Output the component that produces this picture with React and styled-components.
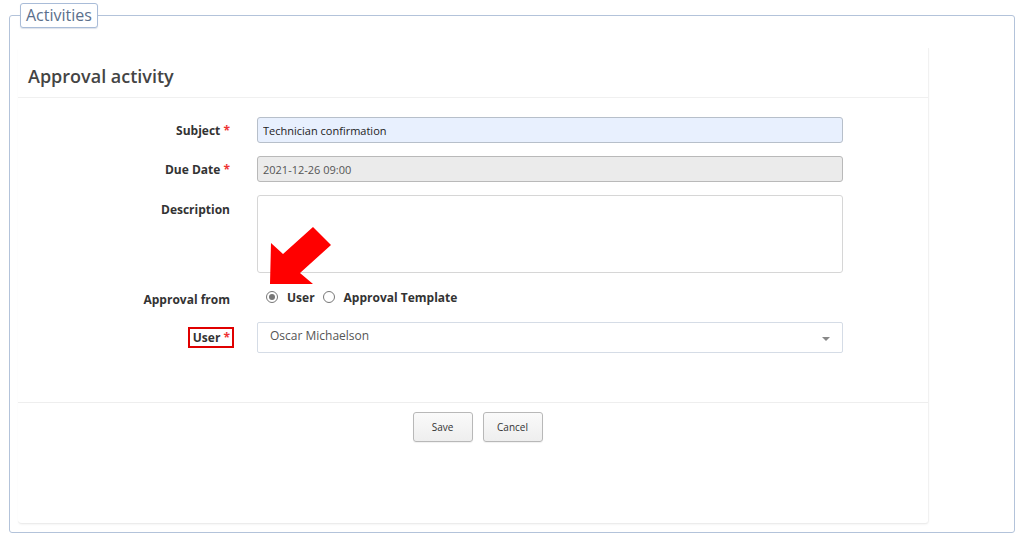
import React from 'react';
import styled, { createGlobalStyle } from 'styled-components';

const GlobalStyle = createGlobalStyle`
  html, body {
    margin: 0;
    padding: 0;
    background: #ffffff;
    font-family: 'Open Sans', 'Noto Sans', sans-serif;
  }
  * { box-sizing: border-box; }
`;

export default function App() {
  return (
    <>
      <GlobalStyle />
      <Frame>
        <Legend>Activities</Legend>
        <Panel>
          <PanelHeader>Approval activity</PanelHeader>
          <PanelBody>
            <Row>
              <Label>Subject <Star>*</Star></Label>
              <TextInput tone="focus" readOnly value="Technician confirmation" />
            </Row>
            <Row>
              <Label>Due Date <Star>*</Star></Label>
              <TextInput tone="disabled" readOnly value="2021-12-26 09:00" />
            </Row>
            <Row top>
              <Label top>Description</Label>
              <TextArea />
            </Row>
            <Row>
              <Label shift>Approval from</Label>
              <RadioGroup>
                <Arrow viewBox="0 0 70 64" aria-hidden="true">
                  <polygon points="2,59 3,18 15,29 45,2 63,20 32,48 45,59" fill="#ff0000" />
                </Arrow>
                <RadioOption>
                  <Radio checked />
                  <span>User</span>
                </RadioOption>
                <RadioOption>
                  <Radio />
                  <span>Approval Template</span>
                </RadioOption>
              </RadioGroup>
            </Row>
            <Row>
              <Label>
                <Highlight>User <Star>*</Star></Highlight>
              </Label>
              <Select>
                <span>Oscar Michaelson</span>
                <Caret />
              </Select>
            </Row>
          </PanelBody>
          <PanelFooter>
            <Button>Save</Button>
            <Button>Cancel</Button>
          </PanelFooter>
        </Panel>
      </Frame>
    </>
  );
}

const Frame = styled.fieldset`
  margin: 3px 0 0 9px;
  width: 1006px;
  height: 530px;
  padding: 12px 8px 8px 8px;
  border: 1px solid #b3c3da;
  border-radius: 3px;
  display: flex;
  flex-direction: column;
`;

const Legend = styled.legend`
  margin-left: 2px;
  padding: 0 5px;
  height: 25px;
  line-height: 22px;
  border: 1px solid #a9bcd8;
  border-radius: 3px;
  color: #5b6f8c;
  font-size: 16px;
  background: #fff;
  box-shadow: 0 1px 1px rgba(120, 140, 170, 0.25);
`;

const Panel = styled.section`
  width: 911px;
  flex: 1;
  margin-top: 8px;
  background: #fff;
  border-right: 1px solid #f1f1f1;
  border-bottom: 1px solid #ececec;
  border-radius: 0 0 4px 4px;
  box-shadow: 0 1px 2px rgba(0, 0, 0, 0.04);
  display: flex;
  flex-direction: column;
`;

const PanelHeader = styled.h2`
  margin: 0;
  padding: 16px 10px 9px;
  font-size: 18px;
  line-height: 24px;
  font-weight: 600;
  color: #444;
  border-bottom: 1px solid #f0f0f0;
`;

const PanelBody = styled.div`
  padding: 19px 0 49px;
  display: flex;
  flex-direction: column;
  gap: 13px;
  border-bottom: 1px solid #eeeeee;
`;

const Row = styled.div`
  display: flex;
  align-items: ${p => (p.top ? 'flex-start' : 'center')};
  gap: 22px;
`;

const Label = styled.label`
  width: 217px;
  padding-right: 5px;
  padding-top: ${p => (p.top ? '6px' : p.shift ? '4px' : '0')};
  text-align: right;
  font-size: 12px;
  font-weight: 700;
  color: #333;
`;

const Star = styled.span`
  color: #e33;
`;

const Highlight = styled.span`
  display: inline-block;
  margin-right: -4px;
  padding: 1px 2px 1px 3px;
  border: 2px solid #e00000;
  line-height: 15px;
`;

const TextInput = styled.input`
  width: 586px;
  height: 26px;
  padding: 0 5px;
  font-family: inherit;
  font-size: 11px;
  border-radius: 3px;
  outline: none;
  border: 1px solid ${p => (p.tone === 'disabled' ? '#b9b9b9' : '#b7bfca')};
  background: ${p => (p.tone === 'disabled' ? '#ebebeb' : '#e8f0fe')};
  color: ${p => (p.tone === 'disabled' ? '#555' : '#222')};
`;

const TextArea = styled.textarea`
  width: 586px;
  height: 78px;
  resize: none;
  border: 1px solid #d6d6d6;
  border-radius: 3px;
  outline: none;
`;

const RadioGroup = styled.div`
  position: relative;
  height: 23px;
  display: flex;
  align-items: center;
  gap: 8px;
  padding-left: 9px;
  padding-bottom: 1px;
  font-size: 12px;
  font-weight: 700;
  color: #333;
`;

const Arrow = styled.svg`
  position: absolute;
  left: 11px;
  top: -61px;
  width: 70px;
  height: 64px;
`;

const RadioOption = styled.span`
  display: inline-flex;
  align-items: center;
  gap: 9px;
`;

const Radio = styled.span`
  width: 12px;
  height: 12px;
  border-radius: 50%;
  border: 1px solid #777;
  background: #fff;
  display: inline-flex;
  align-items: center;
  justify-content: center;
  &::after {
    content: '';
    width: 6px;
    height: 6px;
    border-radius: 50%;
    background: ${p => (p.checked ? '#777' : 'transparent')};
  }
`;

const Select = styled.div`
  width: 586px;
  height: 31px;
  padding: 0 12px;
  border: 1px solid #d5dce6;
  border-radius: 2px;
  display: flex;
  align-items: center;
  justify-content: space-between;
  font-size: 12px;
  color: #555;
  span { margin-top: -5px; }
`;

const Caret = styled.i`
  width: 0;
  height: 0;
  margin-top: 2px;
  border-left: 4px solid transparent;
  border-right: 4px solid transparent;
  border-top: 4px solid #888;
`;

const PanelFooter = styled.div`
  padding: 9px 0 0 9px;
  display: flex;
  justify-content: center;
  gap: 10px;
`;

const Button = styled.button`
  width: 60px;
  height: 30px;
  font-family: inherit;
  font-size: 10px;
  color: #333;
  border: 1px solid #b8b8b8;
  border-radius: 3px;
  background: linear-gradient(#fafafa, #eeeeee);
  box-shadow: 0 1px 1px rgba(0, 0, 0, 0.06);
`;
